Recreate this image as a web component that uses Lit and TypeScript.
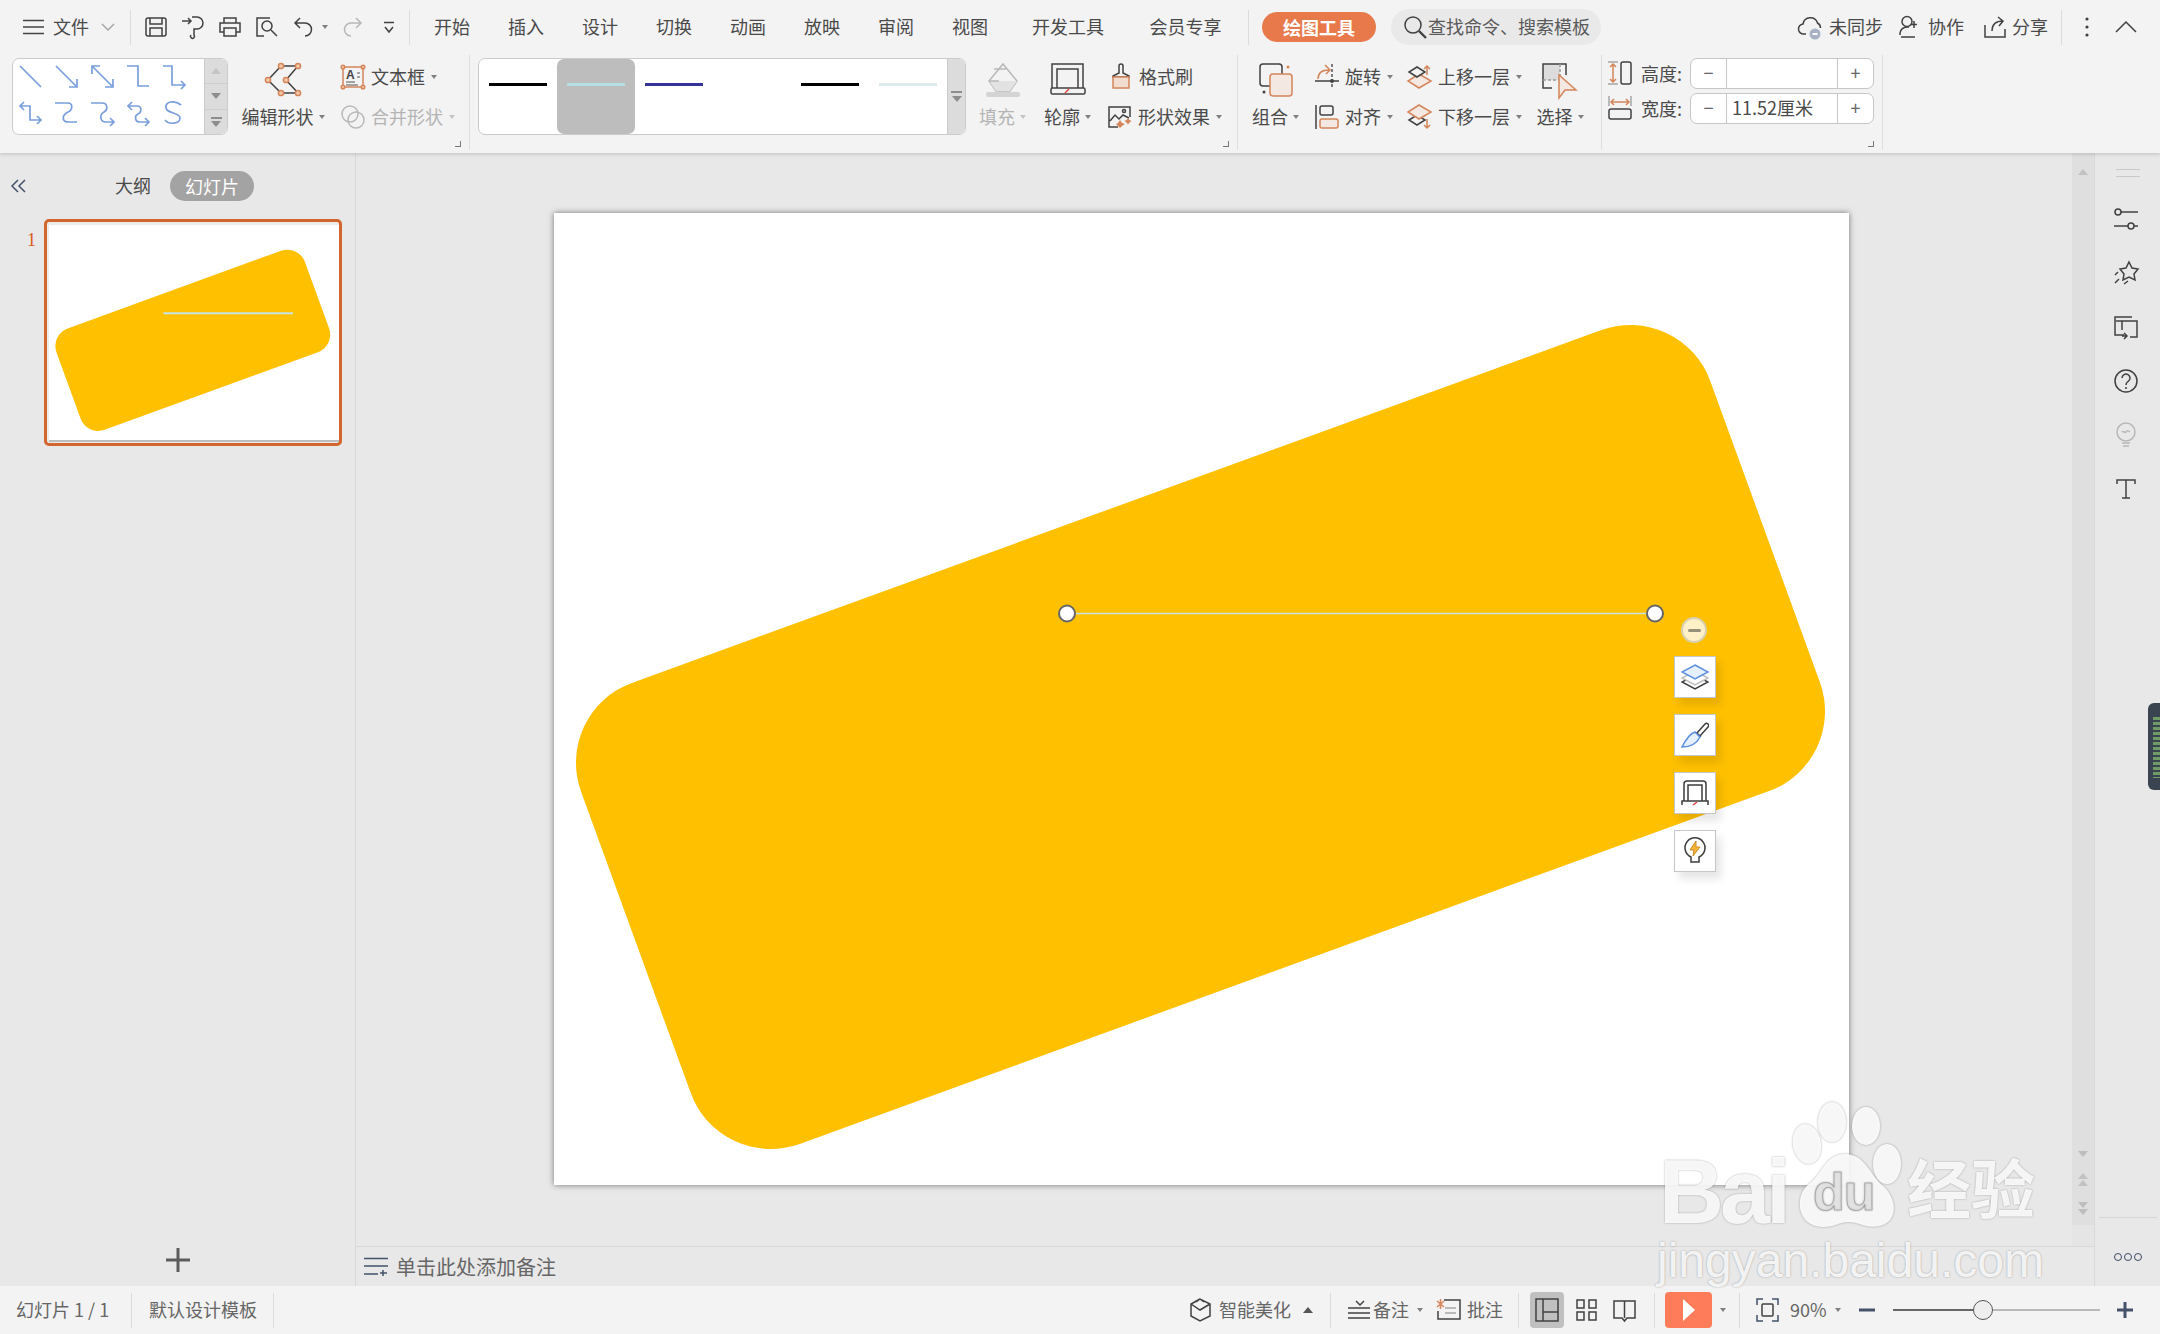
import { LitElement, css, html, svg } from 'lit'
import { customElement } from 'lit/decorators.js'

// quick access + title bar icons
const iMenu = html`<svg class="ml23" width="22" height="16"><path class="k" d="M0 1.5H21M0 8H21M0 14.5H21"/></svg>`
const iChevron = html`<svg width="14" height="8"><path class="lg" d="M1 1L7 7L13 1"/></svg>`
const iSave = html`<svg width="22" height="20"><path class="d" d="M3 1H19a2 2 0 0 1 2 2V17a2 2 0 0 1-2 2H3a2 2 0 0 1-2-2V3a2 2 0 0 1 2-2zM5 1V7H17V1M5 19V11H17V19"/></svg>`
const iSend = html`<svg width="24" height="22"><path class="d" d="M1 5H10M7 2l3 3-3 3M11 1h5a6 6 0 0 1 0 12h-3v6a2 2 0 1 1-3 0"/></svg>`
const iPrint = html`<svg width="22" height="20"><path class="d" d="M5 6V1H17V6M5 15H1V6H21V15H17M5 11H17V19H5z"/></svg>`
const iPreview = html`<svg width="24" height="20"><path class="d" d="M15 1H2V19H9"/><circle class="d" cx="12" cy="9" r="5"/><path class="d" d="M16 13l6 6"/></svg>`
const iUndo = html`<svg width="20" height="20"><path class="d" d="M6 1L1 6L6 11M1 6H11a6.5 6.5 0 0 1 0 13"/></svg>`
const iRedo = html`<svg width="20" height="20"><path class="g" d="M14 1L19 6L14 11M19 6H9a6.5 6.5 0 0 0 0 13"/></svg>`
const iMore = html`<svg width="12" height="13"><path class="d" d="M1 1.5H11M2 6L6 11L10 6"/></svg>`
const iSearch = html`<svg width="24" height="24"><circle class="d" cx="10" cy="10" r="8"/><path class="d sw2" d="M16 16l7 7"/></svg>`
const iCloud = html`<svg width="25" height="26"><path class="d" d="M8 20H6a5 5 0 0 1-1-10a7.5 7.5 0 0 1 14.500-1a5.500 5.500 0 0 1 3 5"/><circle class="fb" cx="17" cy="20" r="5.500"/><path class="w" d="M14.500 20h5"/></svg>`
const iUser = html`<svg width="22" height="24"><circle class="d" cx="8" cy="6.500" r="5"/><path class="d" d="M1 20v-2a7 7 0 0 1 7-6h2M2 22H16M15 6v7M12 9.500h6"/></svg>`
const iShare = html`<svg width="22" height="22"><path class="d" d="M1 9V21H21V13M8 15C8 8 12 5 19 5M14 1l5 4-4 5"/></svg>`
const iDots = html`<svg width="4" height="20"><circle class="fk" cx="2" cy="2" r="1.600"/><circle class="fk" cx="2" cy="10" r="1.600"/><circle class="fk" cx="2" cy="18" r="1.600"/></svg>`
const iUp = html`<svg width="22" height="12"><path class="d" d="M1 11L11 1L21 11"/></svg>`

// connector gallery
const connectors = [
  'M1 1L22 22',
  'M1 1L22 22M22 14V22H14',
  'M1 1L22 22M1 9V1H9M22 14V22H14',
  'M0 1H11V21H22',
  'M0 1H9V20H22M18 16l4 4-4 4',
  'M1 5H11V19H22M5 1L1 5L5 9M18 15l4 4-4 4',
  'M0 2H13C18 2 18 9 13 11C7 14 6 21 14 21H22',
  'M0 2H11C17 2 17 9 13 11C8 14 9 21 15 21H23M19 17l4 4-4 4',
  'M1 5H10C15 5 15 11 11 13C7 15 8 21 13 21H22M5 1L1 5L5 9M18 17l4 4-4 4',
  'M18 4C12 -1 2 0 3 7C4 13 17 11 17 17C17 23 6 24 2 19',
]

// ribbon icons
const iEdit = html`<svg width="34" height="34">
  <path class="d" d="M15 3H32L20 17L32 30H15L2 17z"/>
  ${[[15, 3], [32, 3], [20, 17], [32, 30], [15, 30], [2, 17]].map(
    ([x, y]) => svg`<circle class="node" cx=${x} cy=${y} r="2.600"/>`,
  )}
</svg>`
const iTextBox = html`<svg width="24" height="24">
  <rect class="o" x="2" y="2" width="20" height="20"/>
  ${[[2, 2], [22, 2], [2, 22], [22, 22]].map(([x, y]) => svg`<circle class="node" cx=${x} cy=${y} r="1.800"/>`)}
  <text class="ta" x="5" y="14">A</text>
  <path class="thin" d="M5 17H14M16 8h3M16 12h3M5 20H17"/>
</svg>`
const iMerge = html`<svg width="24" height="24"><circle class="g" cx="9" cy="9" r="8"/><circle class="g" cx="15" cy="15" r="8"/></svg>`
const iFill = html`<svg width="34" height="34">
  <path class="g" d="M17 1L31 18L24 28H10L3 18z"/><path class="fg" d="M3 18H31L24 28H10z"/>
  <path class="g" d="M3 18H13M8 6L20 6"/><rect class="fg2" x="0" y="29" width="34" height="5" rx="2"/>
</svg>`
const iOutline = html`<svg width="36" height="32">
  <path class="d" d="M2 25V1H33V25M7 25V6H28V25"/>
  <rect class="d" x="1" y="25" width="34" height="6" rx="1.500"/><path class="r" d="M15 30l4-4"/>
</svg>`
const iBrush = html`<svg class="brush" width="20" height="25"><path class="d" d="M8 9V2a2 2 0 0 1 4 0V9l6 3V13H2V12z"/><rect class="fo2" x="2" y="13" width="16" height="11"/></svg>`
const iEffects = html`<svg width="24" height="22">
  <path class="d" d="M10 21H1V1H22V11M2 15l5-6 4 4 4-4 6 3"/><circle class="d" cx="16" cy="5" r="1.500"/>
  <path class="fo" d="M12 14l2 3 3 1-3 2-2 2-2-2-2-2 2-1zM20 12l1.500 2 2 1-2 1.500-1.500 2-1.500-2-2-1.500 2-1z"/>
</svg>`
const iGroup = html`<svg width="34" height="34">
  <rect class="d" x="1" y="1" width="22" height="22" rx="3"/>
  <rect class="o po" x="11" y="11" width="22" height="22" rx="3"/>
  <circle class="fk" cx="5" cy="29" r="1.500"/><circle class="fo" cx="29" cy="4" r="1.500"/>
</svg>`
const iRotate = html`<svg width="24" height="25">
  <path class="o" d="M3 15C3 9 7 6 14 6M10 1l5 5-4 4"/><path class="d" d="M0 17H24"/><path class="dash" d="M17 0V25"/>
  <circle class="fk" cx="17" cy="17" r="2"/>
</svg>`
const iAlign = html`<svg width="24" height="24">
  <path class="d" d="M1 0V24"/><rect class="d" x="5" y="1" width="13" height="9" rx="2"/>
  <rect class="o po" x="5" y="14" width="18" height="9" rx="2"/>
</svg>`
const iLayerUp = html`<svg width="25" height="24">
  <path class="o po" d="M12 9L24 16L12 23L1 16z"/><path class="d pf" d="M10 2L18 7L10 12L2 7z"/><path class="o" d="M20 10V1M17 4l3-3 3 3"/>
</svg>`
const iLayerDown = html`<svg width="25" height="25">
  <path class="d" d="M10 11L18 16L10 21L2 16z"/><path class="o po" d="M12 1L24 8L12 15L1 8z"/><path class="o" d="M20 15V24M17 21l3 3 3-3"/>
</svg>`
const iSelect = html`<svg width="36" height="36">
  <rect class="fg3" x="1" y="1" width="17" height="16"/><path class="d" d="M10 25H1V1H24V12"/><path class="dash g2" d="M1 17H18V1"/>
  <path class="o po" d="M17 12V35L23 27H34z"/>
</svg>`
const iHeight = html`<svg width="24" height="24">
  <path class="lg" d="M0 1H10M0 23H10"/><path class="o" d="M5 3V21M2 6l3-3 3 3M2 18l3 3 3-3"/><rect class="d" x="13" y="1" width="10" height="22" rx="2"/>
</svg>`
const iWidth = html`<svg width="24" height="24">
  <path class="lg" d="M1 0V10M23 0V10"/><path class="o" d="M3 6H21M6 3L3 6l3 3M18 3l3 3-3 3"/><rect class="d" x="1" y="13" width="22" height="10" rx="2"/>
</svg>`

// right rail icons
const iSliders = html`<svg width="24" height="22"><circle class="d" cx="4" cy="4" r="3"/><path class="d" d="M7 4H24M0 18H14M20 18H24"/><circle class="d" cx="17" cy="18" r="3"/></svg>`
const iStar = html`<svg width="24" height="24"><path class="d" d="M15 1l3 6 6 1-4 5 1 6-6-3-6 3 1-6-4-5 6-1zM4 11l-3 3M5 18l-4 4M14 20l-4 3"/></svg>`
const iScreen = html`<svg width="24" height="23"><path class="d" d="M18 1H1V19H10M8 5H23V21H16M2 5H8V14M8 20H13M10 17l3 3-3 3"/></svg>`
const iHelp = html`<svg width="24" height="24"><circle class="d" cx="12" cy="12" r="11"/><path class="d" d="M8 9a4 4 0 1 1 6 3.500c-1.500 1-2 2-2 3.500"/><circle class="fk" cx="12" cy="19" r="1"/></svg>`
const iBulb = html`<svg width="20" height="24"><circle class="g" cx="10" cy="9" r="9"/><path class="g" d="M6 9c2-2 3 2 4 0s3-1 4 0M6 20H14M7 23H13"/></svg>`
const iT = html`<svg width="20" height="20"><path class="d" d="M1 5V1H19V5M10 1V19M6 19H14"/></svg>`

// status bar icons
const iSmart = html`<svg width="21" height="24"><path class="d" d="M10 1L1 6V18L10 23L20 18V6zM1 6L10 12L20 6M10 1L6 4M10 1l4 3"/></svg>`
const iNoteLines = html`<svg width="24" height="20"><path class="d" d="M1 8H23M1 18H23M1 13H23M9 1l4 4 4-4"/></svg>`
const iComment = html`<svg width="26" height="24"><path class="d" d="M8 2H24V21H2V13"/><path class="o" d="M1 3L8 9M8 3L1 9M4.500 1V11"/><path class="lg" d="M9 10H20M9 15H20"/></svg>`
const iNormal = html`<svg width="24" height="24"><rect class="d" x="1" y="1" width="22" height="22"/><path class="d" d="M8 1V23M8 14H23"/></svg>`
const iGrid = html`<svg width="21" height="22"><rect class="d" x="1" y="1" width="7" height="8"/><rect class="d" x="13" y="1" width="7" height="8"/><rect class="d" x="1" y="13" width="7" height="8"/><rect class="d" x="13" y="13" width="7" height="8"/></svg>`
const iBook = html`<svg width="23" height="24"><path class="d" d="M11.500 3H1V20H9L11.500 23L14 20H22V3H11.500V20"/></svg>`
const iPlay = html`<svg width="12" height="22"><path class="fw" d="M0 0L12 11L0 22z"/></svg>`
const iFit = html`<svg width="23" height="24"><path class="nv" d="M7 1H1V7M16 1H22V7M7 23H1V17M16 23H22V17"/><rect class="d" x="6" y="6" width="11" height="12" rx="1"/></svg>`
const iNoteAdd = html`<svg width="24" height="20"><path class="nv" d="M0 1.500H24M0 9H24M0 17H14M19 13v6M16 16h7"/></svg>`

@customElement('float-tools')
class FloatTools extends LitElement {
  static styles = css`
    :host { position: absolute; left: 1120px; top: 404px; width: 44px; }
    .minus {
      width: 26px; height: 26px; margin: 0 0 13px 7px; box-sizing: border-box;
      border: 2px solid #d8cfae; border-radius: 50%; background: #fff0c8;
      display: flex; align-items: center; justify-content: center;
    }
    .minus i { width: 13px; height: 3px; background: #97907a; border-radius: 2px; }
    .btn {
      width: 42px; height: 42px; box-sizing: border-box; margin-bottom: 16px;
      background: #fff; border: 1px solid #c6c6c6;
      box-shadow: 5px 7px 8px rgba(0, 0, 0, 0.1);
      display: flex; align-items: center; justify-content: center;
    }
    svg { fill: none; stroke-width: 1.5; }
    .d { stroke: #3d3d3d; }
    .b { stroke: #5b8fe0; fill: #e6effc; }
    .g { stroke: #bdbdbd; fill: #fff; }
    .r { stroke: #e0433f; }
    .y { fill: #f2b632; stroke: #d08a2e; stroke-width: 1; }
  `
  render() {
    return html`
      <div class="minus"><i></i></div>
      <div class="btn">
        <svg width="28" height="26">
          <path class="d" d="M14 11L27 18L14 25L1 18z"/><path class="g" d="M14 7L27 14L14 21L1 14z"/><path class="b" d="M14 1L27 8L14 15L1 8z"/>
        </svg>
      </div>
      <div class="btn">
        <svg width="28" height="26">
          <path class="d" d="M16 11L24 2a2 2 0 0 1 3 3L19 14zM14 10l6 5"/>
          <path class="b" d="M14 10c-6 2-10 9-13 15c7 0 14-2 18-10z"/>
        </svg>
      </div>
      <div class="btn">
        <svg width="28" height="28">
          <path class="d" d="M3 22V5a3 3 0 0 1 3-3H22a3 3 0 0 1 3 3V22M7 22V6H21V22M1 26V22H27V26"/><path class="r" d="M12 26l4-3"/>
        </svg>
      </div>
      <div class="btn">
        <svg width="24" height="28">
          <path class="d" d="M8 20a10 10 0 1 1 8 0V25H8z"/>
          <path class="y" d="M13 4L7 13H11L10 19L17 10H13z"/>
        </svg>
      </div>
    `
  }
}

@customElement('app-root')
export class AppRoot extends LitElement {
  static styles = css`
    :host {
      display: block; position: relative; width: 2160px; height: 1334px; overflow: hidden;
      background: #e8e8e8; color: #4a4a4a;
      font: 18px/1.2 'Noto Sans CJK SC', 'Noto Sans', sans-serif;
    }
    svg { fill: none; stroke-width: 1.5; flex: none; display: block; overflow: visible; }
    .d { stroke: #414141; } .k { stroke: #444; stroke-width: 1.7; } .lg { stroke: #a6a6a6; }
    .g { stroke: #b8b8b8; } .o { stroke: #d4855a; } .po { fill: #f3e8e2; } .pf { fill: #f3f3f3; }
    .w { stroke: #fff; stroke-width: 2; } .r { stroke: #e0433f; } .nv { stroke: #44526b; }
    .thin { stroke: #555; stroke-width: 1; } .sw2 { stroke-width: 2.4; }
    .fb { fill: #a9b2c4; } .fk { fill: #414141; } .fo { fill: #d4855a; } .fo2 { fill: #f1dcd0; stroke: #d4855a; }
    .fw { fill: #fff; } .fg { fill: #e2e2e2; } .fg2 { fill: #d4d4d4; } .fg3 { fill: #dcdcdc; }
    .node { fill: #f3c9a8; stroke: #d4855a; }
    .dash { stroke: #555; stroke-dasharray: 3 2; } .g2 { stroke: #999; }
    .ta { font: 600 12px 'Liberation Sans', sans-serif; fill: #444; }
    .ml2 { margin-left: 2px; } .ml5 { margin-left: 5px; } .ml6 { margin-left: 6px; } .ml7 { margin-left: 7px; }
    .ml8 { margin-left: 8px; } .ml9 { margin-left: 9px; } .ml10 { margin-left: 10px; } .ml11 { margin-left: 11px; }
    .ml12 { margin-left: 12px; } .ml13 { margin-left: 13px; } .ml14 { margin-left: 14px; } .ml15 { margin-left: 15px; }
    .ml16 { margin-left: 16px; } .ml17 { margin-left: 17px; } .ml18 { margin-left: 18px; } .ml20 { margin-left: 20px; }
    .ml23 { margin-left: 23px; } .ml26 { margin-left: 26px; } .ml197 { margin-left: 197px; }

    .caret { flex: none; width: 0; height: 0; border: 3.5px solid transparent; border-top: 4px solid #808080; border-bottom: 0; }
    .caret.off { border-top-color: #c4c4c4; }
    .off { color: #b4b4b4; }

    .ribbon { position: relative; z-index: 2; height: 153px; background: #f3f3f3; box-shadow: 0 2px 3px rgba(0, 0, 0, 0.12); }
    .top { height: 54px; display: flex; align-items: center; }
    .vsep { flex: none; width: 1px; height: 35px; background: #dcdcdc; }
    .cell { flex: none; width: 37px; display: flex; justify-content: center; }
    .tab { flex: none; width: 74px; text-align: center; }
    .tab.w1 { width: 122px; } .tab.w2 { width: 113px; }
    .draw {
      flex: none; width: 114px; height: 30px; border-radius: 15px; background: #e8794a; color: #fff;
      font-weight: 700; text-align: center; line-height: 30px; margin-left: 13px;
    }
    .search {
      flex: none; width: 210px; height: 36px; border-radius: 18px; background: #e9e9e9; color: #5a5a5a;
      display: flex; align-items: center; gap: 1px; padding-left: 12px; box-sizing: border-box; margin-left: 15px;
    }
    .tools { position: relative; display: flex; align-items: flex-start; padding-top: 4px; height: 95px; box-sizing: border-box; }
    .sep { flex: none; width: 1px; height: 95px; margin-top: -3px; background: #dedede; }
    .launcher { position: absolute; width: 5px; height: 5px; border-right: 1px solid #777; border-bottom: 1px solid #777; top: 87px; }
    .l1 { left: 455px; } .l2 { left: 1223px; } .l3 { left: 1868px; }
    .w128 { width: 128px; } .w129 { width: 129px; } .w92 { width: 92px; } .w125 { width: 125px; }

    .gallery {
      flex: none; display: flex; height: 77px; box-sizing: border-box; background: #fff;
      border: 1.5px solid #cbcbcb; border-radius: 7px; overflow: hidden;
    }
    .conn { width: 216px; margin-left: 12px; }
    .grid { width: 192px; display: grid; grid-template-columns: repeat(5, 36px); grid-auto-rows: 35.500px; justify-items: center; align-items: center; margin-left: -1px; }
    .grid path { stroke: #7a9fdc; stroke-width: 1.7; }
    .scroll { flex: 1; background: #dcdcdc; border-left: 1px solid #cbcbcb; display: flex; flex-direction: column; }
    .scroll div { flex: 1; display: flex; flex-direction: column; align-items: center; justify-content: center; gap: 2px; border-top: 1px solid #cfcfcf; }
    .scroll div:first-child { border-top: 0; }
    .up { width: 0; height: 0; border: 5px solid transparent; border-bottom: 6px solid #c4c4c4; border-top: 0; }
    .down { width: 0; height: 0; border: 5px solid transparent; border-top: 6px solid #8e8e8e; border-bottom: 0; }
    .bar { width: 11px; height: 1.500px; background: #8e8e8e; }

    .big { flex: none; width: 55px; display: flex; flex-direction: column; align-items: center; }
    .edit { width: 90px; }
    .w56 { width: 56px; }
    .bigicon { height: 39px; padding-top: 5px; box-sizing: border-box; }
    .biglabel { height: 39px; display: flex; align-items: center; gap: 5px; white-space: nowrap; }
    .stack { flex: none; display: flex; flex-direction: column; }
    .row { height: 39px; display: flex; align-items: center; white-space: nowrap; }
    .row:first-child { height: 37px; margin-bottom: 2px; }
    .row svg { margin-right: 6px; }
    .row svg.brush { margin: 0 8px 0 3px; }
    .row .caret { margin-left: 6px; }
    .lines { width: 488px; margin-left: 8px; }
    .linecells { width: 468px; flex: none; display: flex; }
    .lc { flex: none; width: 78px; height: 100%; display: flex; justify-content: center; padding-top: 24px; box-sizing: border-box; }
    .lc.sel { background: #bdbdbd; border-radius: 7px; }
    .lc i { width: 58px; height: 3px; }
    .c1 { background: #000; } .c2 { background: #b6dfe3; } .c3 { background: #333399; } .c4 { background: #fff; } .c5 { background: #dcecea; }
    .one { flex: 1; display: flex; flex-direction: column; align-items: center; justify-content: center; gap: 3px; background: #dcdcdc; border-left: 1px solid #cbcbcb; }

    .size { flex: none; display: flex; flex-direction: column; }
    .srow { height: 35px; display: flex; align-items: flex-start; }
    .srow svg { margin: 3px 9px 0 0; }
    .srow span.lb { width: 40px; margin: 5px 9px 0 0; white-space: nowrap; }
    .spin { width: 184px; height: 31px; box-sizing: border-box; display: flex; background: #fff; border: 1.5px solid #c6c6c6; border-radius: 7px; }
    .spin b { flex: none; width: 35px; text-align: center; font-weight: 400; line-height: 27px; color: #666; }
    .spin span { flex: 1; border: solid #c6c6c6; border-width: 0 1px; padding-left: 5px; line-height: 27px; }

    .main { height: 1133px; display: flex; }
    .panel { flex: none; width: 355px; border-right: 1px solid #d9d9d9; display: flex; flex-direction: column; box-sizing: content-box; }
    .phead { height: 66px; display: flex; align-items: center; padding-left: 11px; box-sizing: border-box; }
    .outline { margin-left: 89px; }
    .pill { margin-left: 19px; width: 84px; height: 30px; line-height: 30px; border-radius: 15px; background: #a3a3a3; color: #fff; text-align: center; }
    .thumbrow { display: flex; padding-left: 27px; }
    .num { width: 17px; color: #d9581a; font-family: 'Liberation Serif', serif; padding-top: 11px; }
    .thumb { width: 298px; height: 227px; box-sizing: border-box; border: 3px solid #d2672e; border-radius: 5px; padding: 3px 2px 0; background: #ececec; }
    .thumb svg { background: #fff; border-bottom: 2px solid #bdbdbd; }
    .add { margin-top: auto; height: 38px; display: flex; justify-content: center; }

    .center { flex: none; width: 1738px; display: flex; flex-direction: column; }
    .work { flex: none; height: 1093px; display: flex; }
    .canvas { flex: none; width: 1716px; box-sizing: border-box; padding: 60px 0 0 198px; }
    .slide { position: relative; width: 1295px; height: 972px; background: #fff; box-shadow: 0 0 6px rgba(0, 0, 0, 0.5); }
    .vbar { flex: 1; background: #dfdfdf; display: flex; flex-direction: column; align-items: center; }
    .vbar .up { border-bottom-color: #c2c2c2; margin-top: 16px; }
    .vbar .tail { margin-top: auto; height: 21px; width: 100%; background: #e5e5e5; }
    .vbar .down { border-top-color: #bdbdbd; }
    .vbar .dbl { display: flex; flex-direction: column; gap: 1px; margin-top: 16px; }
    .vbar .dbl .up { margin: 0; }
    .vbar .first { margin-top: 976px; }
    .notes { flex: 1; border-top: 1.500px solid #d9d9d9; display: flex; align-items: center; padding-left: 8px; gap: 8px; font-size: 20px; color: #666; }
    .rail { flex: 1; border-left: 1px solid #d9d9d9; display: flex; flex-direction: column; align-items: center; }
    .rail .r0 { height: 39px; display: flex; align-items: center; }
    .handle { width: 24px; height: 6px; border: solid #c8c8c8; border-width: 1.500px 0; }
    .rc { height: 54px; width: 100%; display: flex; align-items: center; justify-content: center; box-sizing: border-box; padding-right: 4px; }
    .rfoot { margin-top: auto; height: 69px; width: 58px; border-top: 1px solid #d6d6d6; display: flex; justify-content: center; padding-top: 35px; box-sizing: border-box; gap: 2px; }
    .rfoot i { width: 6px; height: 6px; border: 1.500px solid #3c4a63; border-radius: 50%; }

    .status { height: 48px; background: #f3f3f3; display: flex; align-items: center; color: #666; position: relative; }
    .status .right { margin-left: auto; width: 970px; flex: none; display: flex; align-items: center; }
    .status .vsep { height: 35px; }
    .status .fixw { flex: none; white-space: nowrap; }
    .status .wa { width: 115px; }
    .viewbtn { flex: none; width: 34px; height: 36px; background: #c0c0c0; border-radius: 4px; display: flex; align-items: center; justify-content: center; }
    .playbtn { flex: none; width: 47px; height: 36px; background: #ff7c5a; border-radius: 4px; display: flex; align-items: center; justify-content: center; }
    .caretup { flex: none; width: 0; height: 0; border: 5px solid transparent; border-bottom: 6px solid #555; border-top: 0; }
    .zoom { flex: none; width: 207px; height: 20px; display: flex; align-items: center; }
    .zoom .a { width: 80px; height: 1.500px; background: #666; }
    .zoom .t { width: 20px; height: 20px; box-sizing: border-box; border: 1.500px solid #555; border-radius: 50%; background: #eee; }
    .zoom .b { flex: 1; height: 1.500px; background: #b9b9b9; }

    .meter {
      position: absolute; right: 0; top: 703px; width: 12px; height: 87px; border-radius: 6px 0 0 6px;
      background: repeating-linear-gradient(180deg, #6f9c66 0 3px, #3a4450 3px 5px);
      border: solid #3a4450; border-width: 14px 0 12px 5px; box-sizing: border-box; z-index: 3;
    }
    .mark {
      position: absolute; left: 1655px; top: 1100px; width: 400px; height: 190px; z-index: 4; pointer-events: none;
      color: rgba(255, 255, 255, 0.9); text-shadow: 0 0 2px rgba(0, 0, 0, 0.35); font-weight: 700;
    }
    .mark > * { position: absolute; }
    .bai { font: 700 90px/1 'Liberation Sans', sans-serif; left: 4px; top: 47px; letter-spacing: -4px; }
    .jing { font: 700 64px/1 'Noto Sans CJK SC', sans-serif; left: 252px; top: 53px; }
    .url { font: 400 48px/1 'Liberation Sans', sans-serif; left: 2px; top: 137px; white-space: nowrap; }
    .paw { left: 134px; top: 2px; filter: drop-shadow(0 0 1px rgba(0, 0, 0, 0.35)); }
    .paw .toe { fill: rgba(255, 255, 255, 0.9); }
    .paw text { font: 700 52px 'Liberation Sans', sans-serif; fill: #e2e2e2; stroke: rgba(120, 120, 120, 0.4); stroke-width: 1; letter-spacing: -1px; }
  `

  private shape(lineWidth: number) {
    return svg`
      <rect x="-600.800" y="-245.300" width="1201.600" height="490.600" rx="85" fill="#ffc000"
        transform="translate(646.500 524) rotate(-20)"/>
      <path d="M513 400.500H1101" stroke="#c4e4e6" stroke-width=${lineWidth}/>
    `
  }

  render() {
    return html`
      <div class="ribbon">
        <div class="top">
          ${iMenu}<span class="ml8 fixw">文件</span><span class="ml12">${iChevron}</span>
          <span class="vsep ml15"></span>
          <span class="cell ml6">${iSave}</span><span class="cell">${iSend}</span><span class="cell">${iPrint}</span>
          <span class="cell">${iPreview}</span><span class="cell">${iUndo}</span>
          <span class="caret"></span><span class="cell ml5">${iRedo}</span><span class="cell">${iMore}</span>
          <span class="vsep ml2"></span>
          <span class="ml5"></span>
          ${['开始', '插入', '设计', '切换', '动画', '放映', '审阅', '视图'].map((t) => html`<span class="tab">${t}</span>`)}
          <span class="tab w1">开发工具</span><span class="tab w2">会员专享</span>
          <span class="vsep ml6"></span>
          <span class="draw">绘图工具</span>
          <div class="search">${iSearch}<span>查找命令、搜索模板</span></div>
          <span class="ml197">${iCloud}</span><span class="ml6">未同步</span>
          <span class="ml16">${iUser}</span><span class="ml7">协作</span>
          <span class="ml20">${iShare}</span><span class="ml6">分享</span>
          <span class="vsep ml13"></span>
          <span class="ml23">${iDots}</span><span class="ml26">${iUp}</span>
        </div>
        <div class="tools">
          <div class="gallery conn">
            <div class="grid">
              ${connectors.map((d) => html`<svg width="23" height="23"><path d=${d}/></svg>`)}
            </div>
            <div class="scroll">
              <div><i class="up"></i></div>
              <div><i class="down"></i></div>
              <div><i class="bar"></i><i class="down"></i></div>
            </div>
          </div>
          <div class="big edit ml10">
            <div class="bigicon">${iEdit}</div>
            <div class="biglabel"><span>编辑形状</span><i class="caret"></i></div>
          </div>
          <div class="stack ml13 w128">
            <div class="row">${iTextBox}<span>文本框</span><i class="caret"></i></div>
            <div class="row off">${iMerge}<span>合并形状</span><i class="caret off"></i></div>
          </div>
          <span class="launcher l1"></span>
          <span class="sep"></span>
          <div class="gallery lines">
            <div class="linecells">
              ${['c1', 'c2', 'c3', 'c4', 'c1', 'c5'].map(
                (c, i) => html`<div class="lc ${i === 1 ? 'sel' : ''}"><i class=${c}></i></div>`,
              )}
            </div>
            <div class="one"><i class="bar"></i><i class="down"></i></div>
          </div>
          <div class="big ml9">
            <div class="bigicon">${iFill}</div>
            <div class="biglabel off"><span>填充</span><i class="caret off"></i></div>
          </div>
          <div class="big ml10">
            <div class="bigicon">${iOutline}</div>
            <div class="biglabel"><span>轮廓</span><i class="caret"></i></div>
          </div>
          <div class="stack ml13 w129">
            <div class="row">${iBrush}<span>格式刷</span></div>
            <div class="row">${iEffects}<span>形状效果</span><i class="caret"></i></div>
          </div>
          <span class="launcher l2"></span>
          <span class="sep"></span>
          <div class="big ml10">
            <div class="bigicon">${iGroup}</div>
            <div class="biglabel"><span>组合</span><i class="caret"></i></div>
          </div>
          <div class="stack ml12 w92">
            <div class="row">${iRotate}<span>旋转</span><i class="caret"></i></div>
            <div class="row">${iAlign}<span>对齐</span><i class="caret"></i></div>
          </div>
          <div class="stack w125">
            <div class="row">${iLayerUp}<span>上移一层</span><i class="caret"></i></div>
            <div class="row">${iLayerDown}<span>下移一层</span><i class="caret"></i></div>
          </div>
          <div class="big w56">
            <div class="bigicon">${iSelect}</div>
            <div class="biglabel"><span>选择</span><i class="caret"></i></div>
          </div>
          <span class="sep ml13"></span>
          <div class="size ml6">
            <div class="srow">${iHeight}<span class="lb">高度:</span>
              <div class="spin"><b>−</b><span></span><b>+</b></div></div>
            <div class="srow">${iWidth}<span class="lb">宽度:</span>
              <div class="spin"><b>−</b><span>11.52厘米</span><b>+</b></div></div>
          </div>
          <span class="launcher l3"></span>
          <span class="sep ml8"></span>
        </div>
      </div>

      <div class="main">
        <div class="panel">
          <div class="phead">
            <svg width="15" height="14"><path class="nv" d="M7 1L1 7L7 13M14 1L8 7L14 13"/></svg>
            <span class="outline">大纲</span><span class="pill">幻灯片</span>
          </div>
          <div class="thumbrow">
            <span class="num">1</span>
            <div class="thumb">
              <svg width="290" height="215" viewBox="-7 0 1318 977">${this.shape(9)}</svg>
            </div>
          </div>
          <div class="add">
            <svg width="24" height="24"><path d="M12 0V24M0 12H24" stroke="#5c5c5c" stroke-width="3"/></svg>
          </div>
        </div>

        <div class="center">
          <div class="work">
            <div class="canvas">
              <div class="slide">
                <svg width="1295" height="972">
                  ${this.shape(1.5)}
                  <circle cx="513" cy="400.500" r="8" fill="#fff" stroke="#666" stroke-width="2"/>
                  <circle cx="1101" cy="400.500" r="8" fill="#fff" stroke="#666" stroke-width="2"/>
                </svg>
                <float-tools></float-tools>
              </div>
            </div>
            <div class="vbar">
              <i class="up"></i>
              <i class="down first"></i>
              <div class="dbl"><i class="up"></i><i class="up"></i></div>
              <div class="dbl"><i class="down"></i><i class="down"></i></div>
              <div class="tail"></div>
            </div>
          </div>
          <div class="notes">${iNoteAdd}<span>单击此处添加备注</span></div>
        </div>

        <div class="rail">
          <div class="r0"><div class="handle"></div></div>
          <div class="rc">${iSliders}</div>
          <div class="rc">${iStar}</div>
          <div class="rc">${iScreen}</div>
          <div class="rc">${iHelp}</div>
          <div class="rc">${iBulb}</div>
          <div class="rc">${iT}</div>
          <div class="rfoot"><i></i><i></i><i></i></div>
        </div>
      </div>

      <div class="status">
        <span class="fixw ml16 wa">幻灯片 1 / 1</span><span class="vsep"></span>
        <span class="fixw ml17">默认设计模板</span><span class="vsep ml16"></span>
        <div class="right">
          ${iSmart}<span class="ml8 fixw">智能美化</span><i class="caretup ml12"></i>
          <span class="vsep ml17"></span>
          <span class="ml16">${iNoteLines}</span><span class="ml2 fixw">备注</span><i class="caret ml8"></i>
          <span class="ml13">${iComment}</span><span class="ml5 fixw">批注</span>
          <span class="vsep ml15"></span>
          <span class="viewbtn ml11">${iNormal}</span>
          <span class="ml12">${iGrid}</span><span class="ml16">${iBook}</span>
          <span class="vsep ml18"></span>
          <span class="playbtn ml10">${iPlay}</span><i class="caret ml8"></i>
          <span class="vsep ml13"></span>
          <span class="ml16">${iFit}</span><span class="ml11 fixw">90%</span><i class="caret ml8"></i>
          <svg class="ml18" width="16" height="4"><path d="M0 2H16" stroke="#44526b" stroke-width="3"/></svg>
          <div class="zoom ml18"><i class="a"></i><i class="t"></i><i class="b"></i></div>
          <svg class="ml17" width="16" height="16"><path d="M8 0V16M0 8H16" stroke="#44526b" stroke-width="3"/></svg>
        </div>
      </div>

      <div class="meter"></div>
      <div class="mark">
        <span class="bai">Bai</span>
        <svg class="paw" width="114" height="128" viewBox="0 0 114 128">
          <ellipse class="toe" cx="18" cy="42" rx="14" ry="20" transform="rotate(-10 18 42)"/>
          <ellipse class="toe" cx="43" cy="20" rx="14" ry="20"/>
          <ellipse class="toe" cx="77" cy="24" rx="14" ry="19"/>
          <ellipse class="toe" cx="98" cy="62" rx="14" ry="20"/>
          <path class="toe" d="M56 52C36 52 34 72 20 82C6 92 6 124 34 125C46 125 50 120 60 120C70 120 78 127 90 124C110 120 108 96 94 84C80 72 76 52 56 52z"/>
          <text x="24" y="108">du</text>
        </svg>
        <span class="jing">经验</span>
        <span class="url">jingyan.baidu.com</span>
      </div>
    `
  }
}

declare global {
  interface HTMLElementTagNameMap {
    'app-root': AppRoot
    'float-tools': FloatTools
  }
}
